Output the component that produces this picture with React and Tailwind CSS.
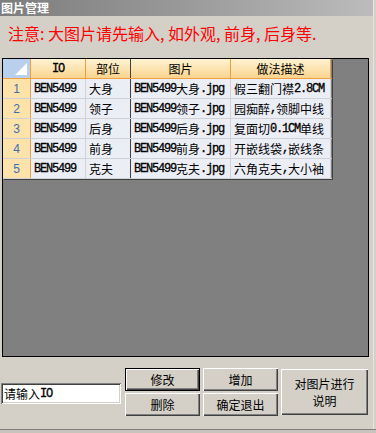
import React from "react";

const CJK = '"Noto Sans CJK SC", sans-serif';

function Mixed({ text }) {
  const runs = [];
  let cur = "";
  let curAscii = null;
  for (const ch of text) {
    const a = ch.charCodeAt(0) < 128;
    if (curAscii === null || a === curAscii) {
      cur += ch;
    } else {
      runs.push([curAscii, cur]);
      cur = ch;
    }
    curAscii = a;
  }
  if (cur) runs.push([curAscii, cur]);
  return (
    <>
      {runs.map(([a, t], i) =>
        a ? (
          <span
            key={i}
            className="font-['Liberation_Mono',monospace] text-[12px] tracking-[-1.2px] [-webkit-text-stroke:0.3px_black]"
          >
            {t}
          </span>
        ) : (
          <span key={i} className="font-['Noto_Sans_CJK_SC',sans-serif] text-[12px]">
            {t}
          </span>
        )
      )}
    </>
  );
}

const rows = [
  ["BEN5499", "大身", "BEN5499大身.jpg", "假三翻门襟2.8CM"],
  ["BEN5499", "领子", "BEN5499领子.jpg", "园痴醉,领脚中线"],
  ["BEN5499", "后身", "BEN5499后身.jpg", "复面切0.1CM单线"],
  ["BEN5499", "前身", "BEN5499前身.jpg", "开嵌线袋,嵌线条"],
  ["BEN5499", "克夫", "BEN5499克夫.jpg", "六角克夫,大小袖"],
];

function Btn({ children, className = "", def = false }) {
  return (
    <div
      className={
        "flex items-center justify-center text-[12px] leading-[16px] text-black bg-[#d4d0c8] text-center " +
        (def
          ? "border border-black shadow-[inset_1px_1px_#ffffff,inset_-1px_-1px_#404040,inset_-2px_-2px_#808080] "
          : "shadow-[inset_1px_1px_#ffffff,inset_-1px_-1px_#404040,inset_-2px_-2px_#808080] ") +
        className
      }
      style={{ fontFamily: CJK }}
    >
      {children}
    </div>
  );
}

const P = ({ c }) => <span className="inline-block w-[8px]">{c}</span>;

export default function App() {
  return (
    <div
      className="relative w-[376px] h-[433px] overflow-hidden bg-[#d4d0c8]"
      style={{ fontFamily: CJK }}
    >
      {/* Title bar */}
      <div className="h-[16px] w-[373px] bg-gradient-to-r from-[#7d7d7d] via-[#9a9a9a] to-[#bcbcbc] flex items-center pl-[1px]">
        <span className="text-white font-bold text-[12px] leading-[16px]">图片管理</span>
      </div>

      {/* Notice */}
      <div className="h-[42px] pl-[8px] pt-[8px]">
        <div className="text-[16px] leading-[18px] text-[#ff0000] whitespace-nowrap">
          注意<P c=":" />大图片请先输入<P c="," />如外观<P c="," />前身<P c="," />后身等<P c="." />
        </div>
      </div>

      {/* Grid panel */}
      <div className="ml-[2px] w-[367px] h-[299px] border border-black bg-[#808080]">
        <div className="w-[329px] shadow-[1px_1px_0_#404040]">
          {/* Header */}
          <div className="flex h-[20px] border-b border-[#f0a040]">
            <div className="w-[28px] h-full bg-[#b9cfee] border-r border-[#f0a040] relative">
              <div className="absolute right-[3px] bottom-[3px] w-0 h-0 border-l-[12px] border-l-transparent border-b-[12px] border-b-white"></div>
            </div>
            {[
              ["IO", "w-[55px] border-r border-[#f0a040]"],
              ["部位", "w-[45px] border-r border-[#404040]"],
              ["图片", "w-[100px] border-r border-[#f0a040]"],
              ["做法描述", "w-[100px] border-r border-[#f0a040]"],
            ].map(([t, cls], i) => (
              <div
                key={i}
                className={
                  "h-full flex items-center justify-center bg-gradient-to-b from-[#fff3d2] to-[#f9d48e] text-black leading-[14px] " +
                  cls
                }
              >
                <Mixed text={t} />
              </div>
            ))}
          </div>
          {/* Rows */}
          {rows.map((r, i) => (
            <div key={i} className="flex h-[20px] border-b border-[#d2d2d6]">
              <div className="w-[28px] h-full bg-[#fde2aa] border-r border-[#f0a040] flex items-center justify-center text-[12px] text-[#3b6fb5] font-['Liberation_Sans',sans-serif]">
                {i + 1}
              </div>
              <div className="w-[55px] h-full bg-[#eceef6] border-r border-[#d2d2d6] flex items-center pl-[3px] whitespace-nowrap overflow-hidden text-black">
                <Mixed text={r[0]} />
              </div>
              <div className="w-[45px] h-full bg-[#eceef6] border-r border-[#404040] flex items-center pl-[3px] whitespace-nowrap overflow-hidden text-black">
                <Mixed text={r[1]} />
              </div>
              <div className="w-[100px] h-full bg-[#eceef6] border-r border-[#d2d2d6] flex items-center pl-[3px] whitespace-nowrap overflow-hidden text-black">
                <Mixed text={r[2]} />
              </div>
              <div className="w-[100px] h-full bg-[#eceef6] border-r border-[#d2d2d6] flex items-center pl-[3px] whitespace-nowrap overflow-hidden text-black">
                <Mixed text={r[3]} />
              </div>
            </div>
          ))}
        </div>
      </div>

      {/* Bottom controls */}
      <div className="flex pl-[1px] pt-[11px]">
        <div className="mt-[15px] w-[120px] h-[21px] bg-white shadow-[inset_1px_1px_#808080,inset_-1px_-1px_#ffffff,inset_2px_2px_#404040,inset_-2px_-2px_#d4d0c8] flex items-center pl-[3px] text-[12px] leading-[14px] text-black">
          <Mixed text="请输入IO" />
        </div>
        <div className="ml-[4px] flex flex-col gap-[2px]">
          <Btn def className="w-[75px] h-[23px]">修改</Btn>
          <Btn className="w-[75px] h-[23px]">删除</Btn>
        </div>
        <div className="ml-[3px] flex flex-col gap-[2px]">
          <Btn className="w-[75px] h-[23px]">增加</Btn>
          <Btn className="w-[75px] h-[23px]">确定退出</Btn>
        </div>
        <div className="ml-[3px] mt-[1px]">
          <Btn className="w-[87px] h-[46px] flex-col">
            <span className="leading-[17px]">对图片进行</span>
            <span className="leading-[17px]">说明</span>
          </Btn>
        </div>
      </div>

      <div className="absolute left-0 top-[429px] w-[376px] h-[4px] border-t border-[#808080] bg-[#c8c4bc]"></div>
      <div className="absolute left-[373px] top-0 w-[3px] h-[429px] bg-[#d4d0c8] border-l border-[#e8e6e0]"></div>
    </div>
  );
}
